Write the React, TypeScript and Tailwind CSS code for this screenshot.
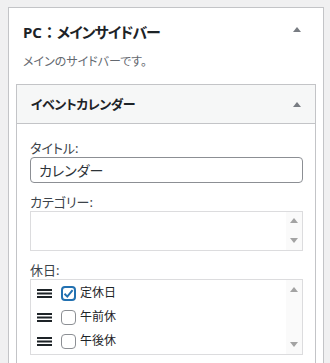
import React from "react";

const font = "font-['Noto_Sans','Noto_Sans_CJK_JP',sans-serif] [font-feature-settings:'palt']";

function UpArrow({ color = "#787c82" }: { color?: string }) {
  return (
    <svg width="8" height="5" viewBox="0 0 8 5" className="block">
      <polygon points="4,0 8,5 0,5" fill={color} />
    </svg>
  );
}

function DownArrow({ color = "#a0a0a0" }: { color?: string }) {
  return (
    <svg width="8" height="5" viewBox="0 0 8 5" className="block">
      <polygon points="0,0 8,0 4,5" fill={color} />
    </svg>
  );
}

function Handle() {
  return (
    <svg width="15" height="9" viewBox="0 0 15 9" className="block">
      <rect x="0" y="0" width="15" height="2" fill="#1d2327" />
      <rect x="0" y="3.5" width="15" height="2" fill="#1d2327" />
      <rect x="0" y="7" width="15" height="2" fill="#1d2327" />
    </svg>
  );
}

function Scrollbar({ topOffset, bottomOffset }: { topOffset: string; bottomOffset: string }) {
  return (
    <div className="flex w-[16px] flex-col items-center justify-between bg-[#fafafa]">
      <div className={topOffset}>
        <UpArrow color="#a3a3a3" />
      </div>
      <div className={bottomOffset}>
        <DownArrow color="#a3a3a3" />
      </div>
    </div>
  );
}

function Row({ label, checked }: { label: string; checked?: boolean }) {
  return (
    <div className="flex h-[24px] items-center pl-[6px]">
      <Handle />
      <div className="ml-[9px]">
        {checked ? (
          <div className="flex h-[15px] w-[15px] items-center justify-center rounded-[4px] border-2 border-[#2271b1] bg-white">
            <svg width="11" height="11" viewBox="0 0 11 11">
              <path d="M1.5 5.8 L4.3 8.6 L9.6 2.2" fill="none" stroke="#2271b1" strokeWidth="2" />
            </svg>
          </div>
        ) : (
          <div className="h-[15px] w-[15px] rounded-[4px] border border-[#8c8f94] bg-white" />
        )}
      </div>
      <span className="ml-[4px] text-[12px] leading-[18px] text-[#1d2327]">{label}</span>
    </div>
  );
}

export default function App() {
  return (
    <div className={`h-[363px] w-[330px] overflow-hidden bg-[#f0f0f1] pl-[8px] pt-[7px] ${font}`}>
      <div className="h-[400px] w-[316px] border border-[#c3c4c7] bg-white">
        <div className="flex items-start justify-between pl-[14px] pr-[22px] pt-[14px]">
          <h2 className="text-[15px] font-bold leading-[20px] text-[#1d2327]">
            PC<span className="[font-feature-settings:normal]">：</span>
            <span className="tracking-[-1px]">メインサイドバー</span>
          </h2>
          <div className="mt-[5px]">
            <UpArrow />
          </div>
        </div>
        <p className="mt-[11px] pl-[14px] text-[12px] leading-[18px] text-[#646970]">メインのサイドバーです。</p>
        <div className="mx-[7px] mt-[13px] h-[300px] border border-[#c3c4c7] bg-white">
          <div className="flex h-[39px] items-center justify-between border-b border-[#c3c4c7] bg-[#f6f7f7] pl-[14px] pr-[14px]">
            <h3 className="text-[13px] font-bold leading-[20px] tracking-[-0.5px] text-[#1d2327]">イベントカレンダー</h3>
            <UpArrow />
          </div>
          <div className="pl-[13px] pr-[12px] pt-[15px]">
            <label className="block text-[13px] leading-[18px] text-[#3c434a]">タイトル:</label>
            <div className="flex h-[26px] items-center rounded-[4px] border border-[#8c8f94] pl-[8px] text-[14px] text-[#2c3338]">
              カレンダー
            </div>
            <label className="mt-[10px] block text-[13px] leading-[18px] text-[#3c434a]">カテゴリー:</label>
            <div className="flex h-[40px] justify-end border border-[#dcdcde] bg-white">
              <Scrollbar topOffset="mt-[6px]" bottomOffset="mb-[7px]" />
            </div>
            <label className="mt-[10px] block text-[13px] leading-[18px] text-[#3c434a]">休日:</label>
            <div className="flex h-[76px] border border-[#dcdcde] bg-white">
              <div className="flex-1 pt-[1px]">
                <Row label="定休日" checked />
                <Row label="午前休" />
                <Row label="午後休" />
              </div>
              <Scrollbar topOffset="mt-[7px]" bottomOffset="mb-[7px]" />
            </div>
          </div>
        </div>
      </div>
    </div>
  );
}
